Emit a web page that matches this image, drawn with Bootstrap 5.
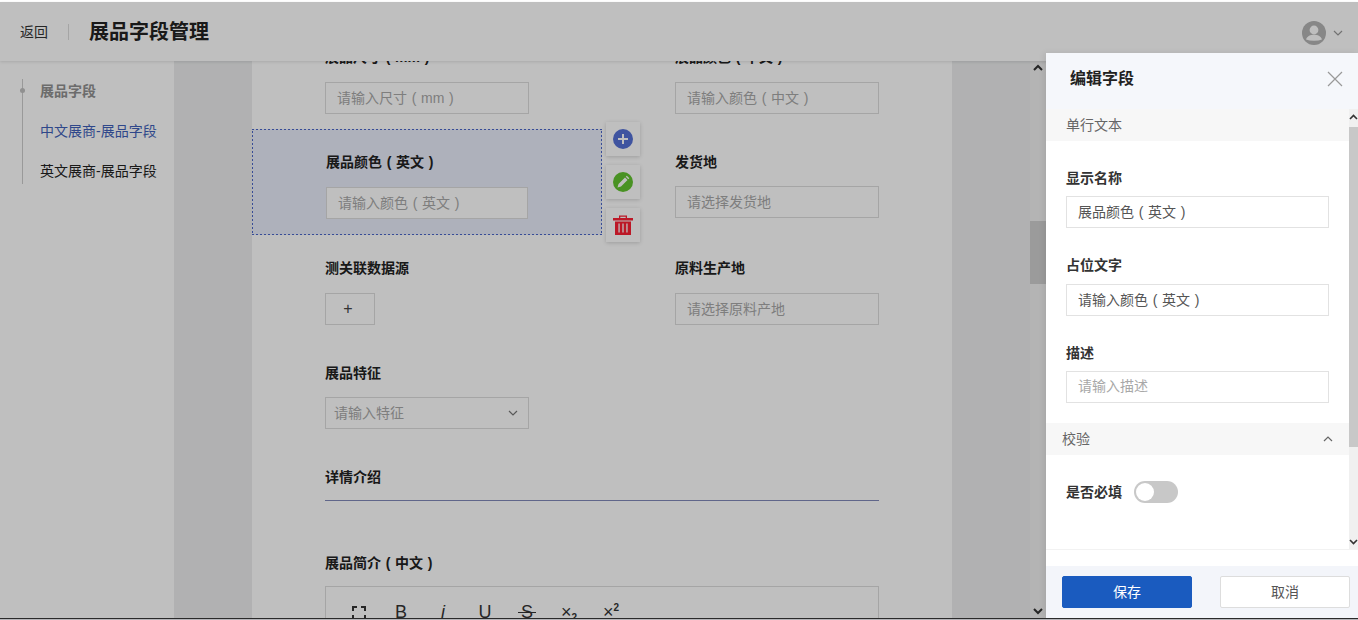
<!DOCTYPE html>
<html lang="zh">
<head>
<meta charset="utf-8">
<title>展品字段管理</title>
<link href="https://cdn.jsdelivr.net/npm/bootstrap@5.3.0/dist/css/bootstrap.min.css" rel="stylesheet">
<style>
html,body{height:100%;overflow:hidden}
body{font-family:"Liberation Sans","Noto Sans CJK SC",sans-serif;font-size:14px;color:#2b2b2b;background:#fff;word-spacing:.8px}
.app-shell{height:618px;padding-top:2px;display:flex;flex-direction:column;position:relative;background:#fff}
.top-bar{height:59px;flex:none;background:#fff;box-shadow:0 1px 3px rgba(0,0,0,.12);position:relative;z-index:2;padding:0 15px 0 20px}
.back-link{color:#333;font-size:14px;text-decoration:none;padding-right:20px;border-right:1px solid #ddd;line-height:16px}
.page-title{font-size:20px;font-weight:700;margin:0 0 0 20px;color:#222;line-height:28px}
.user-box{gap:7px;margin-top:3px}
.work-area{flex:1;min-height:0;overflow:hidden}
.side-nav{width:174px;flex:none;background:#fff;padding:18px 0 0 22px}
.side-list{border-left:1px solid #ccc;height:105px;padding:1px 0 0 17px;position:relative}
.side-item{display:block;height:40px;line-height:22px;font-size:14px;color:#222;white-space:nowrap;text-decoration:none}
.side-item.is-head{font-weight:700;color:#909090}
.side-item.is-active{color:#3f5fb8}
.side-dot{position:absolute;left:-3px;top:9px;width:5px;height:5px;border-radius:50%;background:#c0c0c0}
.gutter{flex:1;background:#ecedee;position:relative;overflow:hidden}
.form-sheet{width:700px;margin-left:78px;height:100%;background:#fff;overflow:hidden}
.form-scroll{margin-top:-37px}
.field-row{display:flex;height:105px}
.field-row.is-tall{height:106px}
.field-cell{width:350px;padding:23px 0 0 73px;position:relative}
.field-cell.is-picked{padding-left:74px;background-color:#e8ecfa;
  background-image:linear-gradient(90deg,#4a66c8 50%,transparent 50%),linear-gradient(90deg,#4a66c8 50%,transparent 50%),linear-gradient(0deg,#4a66c8 50%,transparent 50%),linear-gradient(0deg,#4a66c8 50%,transparent 50%);
  background-size:4px 1px,4px 1px,1px 4px,1px 4px;
  background-position:0 0,0 100%,0 0,100% 0;
  background-repeat:repeat-x,repeat-x,repeat-y,repeat-y}
.field-label{font-size:14px;font-weight:700;line-height:20px;margin-bottom:15px;color:#222;white-space:nowrap}
.field-label.is-near{margin-bottom:14px}
.field-control{width:204px;height:32px;border:1px solid #ddd;border-radius:0;padding:0 11px;font-size:14px;color:#333;box-shadow:none;background:#fff;word-spacing:.8px}
.field-control::placeholder{color:#a8a8a8}
.is-picked .field-control{width:202px}
.add-box{width:50px;height:32px;background:#fff;border:1px solid #ddd;border-radius:0;color:#444;font-size:16px;line-height:28px;padding:0 4px 0 0}
.field-select{width:204px;height:32px;border:1px solid #ddd;padding:0 10px 0 8px;color:#a8a8a8;font-size:14px;background:#fff}
.tool-stack{position:absolute;left:354px;top:-7px;display:flex;flex-direction:column;gap:9px;z-index:1}
.tool-tile{width:34px;height:34px;background:#fff;box-shadow:0 1px 4px rgba(0,0,0,.18);display:flex;align-items:center;justify-content:center}
.detail-head{margin:0 73px;padding-top:22px;height:56px;border-bottom:1px solid #8088b8;font-size:14px;font-weight:700;line-height:20px;color:#222}
.rich-label{margin:52px 73px 0;font-size:14px;font-weight:700;line-height:20px;color:#222}
.rich-box{margin:13px 73px 0;height:70px;border:1px solid #ddd;padding:13px 25px;display:flex;gap:26px;align-items:flex-start;color:#333;font-size:18px;line-height:24px}
.rich-tool{width:16px;text-align:center;white-space:nowrap;flex:none;position:relative}
.rich-tool.is-i{font-style:italic}
.rich-tool.is-u{text-decoration:underline}
.rich-tool.is-s::after{content:"";position:absolute;left:-1px;right:-1px;top:12px;height:1px;background:#333}
.rich-tool sub,.rich-tool sup{font-size:10px;font-weight:700}
.rich-tool sup{top:-.7em}
.page-scroll{position:absolute;right:312px;top:61px;bottom:0;width:16px;background:#f0f0f0;z-index:1}
.page-scroll-thumb{position:absolute;left:0;right:0;top:160px;height:63px;background:#cfcfcf}
.arrow-up,.arrow-down{position:absolute;left:3px;width:10px;height:10px}
.dim-layer{position:absolute;inset:2px 0 0 0;background:rgba(0,0,0,.25);z-index:5}
.edit-panel{position:absolute;right:0;top:53px;bottom:0;width:312px;background:#fff;z-index:6;display:flex;flex-direction:column;box-shadow:-2px 0 6px rgba(0,0,0,.08)}
.panel-head{height:56px;flex:none;background:#f5f7fb;padding:0 15px 4px 24px;display:flex;align-items:center;justify-content:space-between}
.panel-title{font-size:16px;font-weight:700;color:#222;margin:0;line-height:22px}
.panel-body{flex:1;min-height:0;position:relative;overflow:hidden;padding-right:9px;border-bottom:1px solid #f2f2f2}
.panel-track{position:absolute;right:0;top:0;bottom:0;width:9px;background:#f0f0f0}
.panel-thumb{position:absolute;left:0;right:0;top:18px;height:320px;background:#c8c8c8}
.panel-arrow-up,.panel-arrow-down{position:absolute;left:0;width:9px;height:9px}
.sect-bar{height:32px;background:#f7f7f7;line-height:32px;font-size:14px;color:#666;display:flex;justify-content:space-between;align-items:center}
.panel-field{padding:27px 20px 0}
.panel-label{font-size:14px;font-weight:700;line-height:20px;color:#333;margin-bottom:8px}
.panel-label.is-far{margin-bottom:9px}
.panel-input{width:100%;height:32px;border:1px solid #e2e2e2;border-radius:0;padding:0 11px 2px;font-size:14px;color:#555;box-shadow:none;word-spacing:.8px}
.panel-input::placeholder{color:#a8a8a8}
.check-bar{margin-top:20px}
.switch-row{padding-top:26px}
.switch-track{width:44px;height:22px;background:#c8c8c8;border-radius:11px;padding:2px;display:block}
.switch-knob{display:block;width:18px;height:18px;background:#fff;border-radius:50%}
.panel-foot{height:52px;flex:none;background:#f3f5fa;margin-top:16px;padding:10px 8px 10px 16px;display:flex;justify-content:space-between}
.foot-btn{width:130px;height:32px;border-radius:2px;font-size:14px;line-height:30px;padding:0}
.foot-btn.is-save{background:#1a5bbf;border:1px solid #1a5bbf;color:#fff}
.foot-btn.is-cancel{background:#fff;border:1px solid #ddd;color:#555}
.bottom-edge{position:absolute;left:0;right:0;bottom:0;height:2px;background:#b4b4b8;border-top:1px solid #2a2a2a;z-index:7}
</style>
</head>
<body>
<div class="app-shell">
  <header class="top-bar d-flex align-items-center">
    <a class="back-link" href="#">返回</a>
    <h1 class="page-title">展品字段管理</h1>
    <div class="ms-auto d-flex align-items-center user-box">
      <svg width="24" height="24" viewBox="0 0 24 24"><circle cx="12" cy="12" r="12" fill="#b4b4b4"/><circle cx="12" cy="9" r="4.400" fill="#fff"/><path d="M4 18.500c1.200-3.400 4.400-4.800 8-4.800s6.800 1.400 8 4.800a10.500 3.500 0 0 1-16 0z" fill="#fff"/></svg>
      <svg width="10" height="6" viewBox="0 0 10 6"><path d="M1 1l4 4 4-4" fill="none" stroke="#999" stroke-width="1.200"/></svg>
    </div>
  </header>
  <div class="work-area d-flex">
    <nav class="side-nav">
      <div class="side-list">
        <span class="side-dot"></span>
        <a class="side-item is-head">展品字段</a>
        <a class="side-item is-active">中文展商-展品字段</a>
        <a class="side-item">英文展商-展品字段</a>
      </div>
    </nav>
    <main class="gutter">
      <div class="form-sheet">
        <div class="form-scroll">
          <div class="field-row">
            <div class="field-cell"><div class="field-label">展品尺寸 ( mm ) </div><input class="form-control field-control" placeholder="请输入尺寸 ( mm ) "></div>
            <div class="field-cell"><div class="field-label">展品颜色 ( 中文 ) </div><input class="form-control field-control" placeholder="请输入颜色 ( 中文 ) "></div>
          </div>
          <div class="field-row is-tall position-relative">
            <div class="field-cell is-picked"><div class="field-label">展品颜色 ( 英文 ) </div><input class="form-control field-control" placeholder="请输入颜色 ( 英文 ) "></div>
            <div class="field-cell"><div class="field-label is-near">发货地</div><input class="form-control field-control" placeholder="请选择发货地"></div>
            <div class="tool-stack">
              <div class="tool-tile"><svg width="20" height="20" viewBox="0 0 20 20"><circle cx="10" cy="10" r="10" fill="#5470d6"/><path d="M10 5v10M5 10h10" stroke="#fff" stroke-width="2"/></svg></div>
              <div class="tool-tile"><svg width="20" height="20" viewBox="0 0 20 20"><circle cx="10" cy="10" r="10" fill="#62c32f"/><path d="M4.500 15.500l1-3.500 6.500-6.500 2.500 2.500-6.500 6.500zM12.800 4.700l1-1 2.500 2.500-1 1z" fill="#fff"/></svg></div>
              <div class="tool-tile"><svg width="20" height="20" viewBox="0 0 20 20"><path d="M0 3h20v2.500H0zM6 3V.5h8V3h-1.300V1.700H7.300V3z" fill="#fb2035"/><path d="M2 6.500h16V20H2zM5.400 8.500v9h1.300v-9zM9.350 8.500v9h1.300v-9zM13.300 8.500v9h1.300v-9z" fill="#fb2035" fill-rule="evenodd"/></svg></div>
            </div>
          </div>
          <div class="field-row">
            <div class="field-cell"><div class="field-label">测关联数据源</div><button class="btn add-box" type="button">+</button></div>
            <div class="field-cell"><div class="field-label">原料生产地</div><input class="form-control field-control" placeholder="请选择原料产地"></div>
          </div>
          <div class="field-row">
            <div class="field-cell"><div class="field-label is-near">展品特征</div>
              <div class="field-select d-flex align-items-center justify-content-between"><span>请输入特征</span><svg width="10" height="6" viewBox="0 0 10 6"><path d="M1 1l4 4 4-4" fill="none" stroke="#777" stroke-width="1.200"/></svg></div>
            </div>
          </div>
          <div class="detail-head">详情介绍</div>
          <div class="rich-label">展品简介 ( 中文 ) </div>
          <div class="rich-box">
            <span class="rich-tool"><svg width="14" height="14" viewBox="0 0 14 14"><path d="M1 5V1h4M9 1h4v4M13 9v4H9M5 13H1V9" fill="none" stroke="#333" stroke-width="2"/></svg></span>
            <span class="rich-tool">B</span>
            <span class="rich-tool is-i">i</span>
            <span class="rich-tool is-u">U</span>
            <span class="rich-tool is-s">S</span>
            <span class="rich-tool">×<sub>2</sub></span>
            <span class="rich-tool">×<sup>2</sup></span>
          </div>
        </div>
      </div>
    </main>
  </div>
  <div class="page-scroll">
    <svg class="arrow-up" style="top:2px" viewBox="0 0 10 10"><path d="M1 7l4-4 4 4" fill="none" stroke="#333" stroke-width="2"/></svg>
    <div class="page-scroll-thumb"></div>
    <svg class="arrow-down" style="bottom:2px" viewBox="0 0 10 10"><path d="M1 3l4 4 4-4" fill="none" stroke="#333" stroke-width="2"/></svg>
  </div>
  <div class="dim-layer"></div>
  <aside class="edit-panel">
    <div class="panel-head">
      <h2 class="panel-title">编辑字段</h2>
      <svg width="16" height="16" viewBox="0 0 16 16"><path d="M1 1l14 14M15 1L1 15" stroke="#999" stroke-width="1.200"/></svg>
    </div>
    <div class="panel-body">
      <div class="sect-bar"><span class="ps-3 ms-1">单行文本</span></div>
      <div class="panel-field"><div class="panel-label">显示名称</div><input class="form-control panel-input" value="展品颜色 ( 英文 ) "></div>
      <div class="panel-field"><div class="panel-label is-far">占位文字</div><input class="form-control panel-input" value="请输入颜色 ( 英文 ) "></div>
      <div class="panel-field"><div class="panel-label">描述</div><input class="form-control panel-input" placeholder="请输入描述"></div>
      <div class="sect-bar check-bar"><span class="ps-3">校验</span><svg class="me-3" width="10" height="6" viewBox="0 0 10 6"><path d="M1 5l4-4 4 4" fill="none" stroke="#666" stroke-width="1.200"/></svg></div>
      <div class="panel-field switch-row d-flex align-items-center gap-2"><span class="panel-label mb-0 me-1">是否必填</span><span class="switch-track"><span class="switch-knob"></span></span></div>
      <div class="panel-track">
        <svg class="panel-arrow-up" style="top:4px" viewBox="0 0 9 9"><path d="M1 6l3.500-3.500L8 6" fill="none" stroke="#333" stroke-width="1.600"/></svg>
        <div class="panel-thumb"></div>
        <svg class="panel-arrow-down" style="bottom:3px" viewBox="0 0 9 9"><path d="M1 3l3.500 3.500L8 3" fill="none" stroke="#333" stroke-width="1.600"/></svg>
      </div>
    </div>
    <div class="panel-foot">
      <button class="btn foot-btn is-save" type="button">保存</button>
      <button class="btn foot-btn is-cancel" type="button">取消</button>
    </div>
  </aside>
</div>
<div class="bottom-edge"></div>
<script src="https://cdn.jsdelivr.net/npm/bootstrap@5.3.0/dist/js/bootstrap.bundle.min.js"></script>
</body>
</html>
